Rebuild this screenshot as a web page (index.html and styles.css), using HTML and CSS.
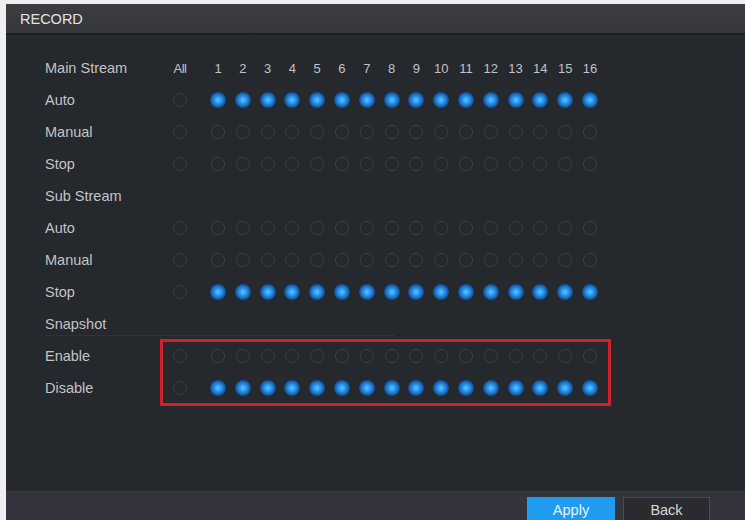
FILE: index.html
```html
<!DOCTYPE html>
<html>
<head>
<meta charset="utf-8">
<link rel="stylesheet" href="styles.css">
</head>
<body>
<div class="panel">
  <div class="titlebar">RECORD</div>
  <div class="content">
    <div class="row head">
      <span class="label">Main Stream</span>
      <span class="cell all">All</span>
      <span class="cells">
        <span class="cell">1</span><span class="cell">2</span><span class="cell">3</span><span class="cell">4</span><span class="cell">5</span><span class="cell">6</span><span class="cell">7</span><span class="cell">8</span><span class="cell">9</span><span class="cell">10</span><span class="cell">11</span><span class="cell">12</span><span class="cell">13</span><span class="cell">14</span><span class="cell">15</span><span class="cell">16</span>
      </span>
    </div>
    <div class="row">
      <span class="label">Auto</span>
      <span class="cell all"><i class="r"></i></span>
      <span class="cells">
        <span class="cell"><i class="r on"></i></span><span class="cell"><i class="r on"></i></span><span class="cell"><i class="r on"></i></span><span class="cell"><i class="r on"></i></span><span class="cell"><i class="r on"></i></span><span class="cell"><i class="r on"></i></span><span class="cell"><i class="r on"></i></span><span class="cell"><i class="r on"></i></span><span class="cell"><i class="r on"></i></span><span class="cell"><i class="r on"></i></span><span class="cell"><i class="r on"></i></span><span class="cell"><i class="r on"></i></span><span class="cell"><i class="r on"></i></span><span class="cell"><i class="r on"></i></span><span class="cell"><i class="r on"></i></span><span class="cell"><i class="r on"></i></span>
      </span>
    </div>
    <div class="row">
      <span class="label">Manual</span>
      <span class="cell all"><i class="r"></i></span>
      <span class="cells">
        <span class="cell"><i class="r"></i></span><span class="cell"><i class="r"></i></span><span class="cell"><i class="r"></i></span><span class="cell"><i class="r"></i></span><span class="cell"><i class="r"></i></span><span class="cell"><i class="r"></i></span><span class="cell"><i class="r"></i></span><span class="cell"><i class="r"></i></span><span class="cell"><i class="r"></i></span><span class="cell"><i class="r"></i></span><span class="cell"><i class="r"></i></span><span class="cell"><i class="r"></i></span><span class="cell"><i class="r"></i></span><span class="cell"><i class="r"></i></span><span class="cell"><i class="r"></i></span><span class="cell"><i class="r"></i></span>
      </span>
    </div>
    <div class="row">
      <span class="label">Stop</span>
      <span class="cell all"><i class="r"></i></span>
      <span class="cells">
        <span class="cell"><i class="r"></i></span><span class="cell"><i class="r"></i></span><span class="cell"><i class="r"></i></span><span class="cell"><i class="r"></i></span><span class="cell"><i class="r"></i></span><span class="cell"><i class="r"></i></span><span class="cell"><i class="r"></i></span><span class="cell"><i class="r"></i></span><span class="cell"><i class="r"></i></span><span class="cell"><i class="r"></i></span><span class="cell"><i class="r"></i></span><span class="cell"><i class="r"></i></span><span class="cell"><i class="r"></i></span><span class="cell"><i class="r"></i></span><span class="cell"><i class="r"></i></span><span class="cell"><i class="r"></i></span>
      </span>
    </div>
    <div class="row">
      <span class="label">Sub Stream</span>
    </div>
    <div class="row">
      <span class="label">Auto</span>
      <span class="cell all"><i class="r"></i></span>
      <span class="cells">
        <span class="cell"><i class="r"></i></span><span class="cell"><i class="r"></i></span><span class="cell"><i class="r"></i></span><span class="cell"><i class="r"></i></span><span class="cell"><i class="r"></i></span><span class="cell"><i class="r"></i></span><span class="cell"><i class="r"></i></span><span class="cell"><i class="r"></i></span><span class="cell"><i class="r"></i></span><span class="cell"><i class="r"></i></span><span class="cell"><i class="r"></i></span><span class="cell"><i class="r"></i></span><span class="cell"><i class="r"></i></span><span class="cell"><i class="r"></i></span><span class="cell"><i class="r"></i></span><span class="cell"><i class="r"></i></span>
      </span>
    </div>
    <div class="row">
      <span class="label">Manual</span>
      <span class="cell all"><i class="r"></i></span>
      <span class="cells">
        <span class="cell"><i class="r"></i></span><span class="cell"><i class="r"></i></span><span class="cell"><i class="r"></i></span><span class="cell"><i class="r"></i></span><span class="cell"><i class="r"></i></span><span class="cell"><i class="r"></i></span><span class="cell"><i class="r"></i></span><span class="cell"><i class="r"></i></span><span class="cell"><i class="r"></i></span><span class="cell"><i class="r"></i></span><span class="cell"><i class="r"></i></span><span class="cell"><i class="r"></i></span><span class="cell"><i class="r"></i></span><span class="cell"><i class="r"></i></span><span class="cell"><i class="r"></i></span><span class="cell"><i class="r"></i></span>
      </span>
    </div>
    <div class="row">
      <span class="label">Stop</span>
      <span class="cell all"><i class="r"></i></span>
      <span class="cells">
        <span class="cell"><i class="r on"></i></span><span class="cell"><i class="r on"></i></span><span class="cell"><i class="r on"></i></span><span class="cell"><i class="r on"></i></span><span class="cell"><i class="r on"></i></span><span class="cell"><i class="r on"></i></span><span class="cell"><i class="r on"></i></span><span class="cell"><i class="r on"></i></span><span class="cell"><i class="r on"></i></span><span class="cell"><i class="r on"></i></span><span class="cell"><i class="r on"></i></span><span class="cell"><i class="r on"></i></span><span class="cell"><i class="r on"></i></span><span class="cell"><i class="r on"></i></span><span class="cell"><i class="r on"></i></span><span class="cell"><i class="r on"></i></span>
      </span>
    </div>
    <div class="row section">
      <span class="label">Snapshot</span>
    </div>
    <div class="snap">
      <div class="row">
        <span class="label">Enable</span>
        <span class="cell all"><i class="r"></i></span>
        <span class="cells">
          <span class="cell"><i class="r"></i></span><span class="cell"><i class="r"></i></span><span class="cell"><i class="r"></i></span><span class="cell"><i class="r"></i></span><span class="cell"><i class="r"></i></span><span class="cell"><i class="r"></i></span><span class="cell"><i class="r"></i></span><span class="cell"><i class="r"></i></span><span class="cell"><i class="r"></i></span><span class="cell"><i class="r"></i></span><span class="cell"><i class="r"></i></span><span class="cell"><i class="r"></i></span><span class="cell"><i class="r"></i></span><span class="cell"><i class="r"></i></span><span class="cell"><i class="r"></i></span><span class="cell"><i class="r"></i></span>
        </span>
      </div>
      <div class="row">
        <span class="label">Disable</span>
        <span class="cell all"><i class="r"></i></span>
        <span class="cells">
          <span class="cell"><i class="r on"></i></span><span class="cell"><i class="r on"></i></span><span class="cell"><i class="r on"></i></span><span class="cell"><i class="r on"></i></span><span class="cell"><i class="r on"></i></span><span class="cell"><i class="r on"></i></span><span class="cell"><i class="r on"></i></span><span class="cell"><i class="r on"></i></span><span class="cell"><i class="r on"></i></span><span class="cell"><i class="r on"></i></span><span class="cell"><i class="r on"></i></span><span class="cell"><i class="r on"></i></span><span class="cell"><i class="r on"></i></span><span class="cell"><i class="r on"></i></span><span class="cell"><i class="r on"></i></span><span class="cell"><i class="r on"></i></span>
        </span>
      </div>
      <div class="highlight"></div>
    </div>
  </div>
  <div class="footer">
    <button class="btn apply">Apply</button>
    <button class="btn back">Back</button>
  </div>
</div>
</body>
</html>
```
FILE: styles.css
```css
* { box-sizing: border-box; }
html, body {
  margin: 0;
  padding: 0;
  background: #eeeff1;
  width: 745px;
  height: 520px;
  overflow: hidden;
  font-family: "Liberation Sans", Arial, sans-serif;
}
.panel {
  margin: 4px 0 0 6px;
  width: 739px;
  height: 516px;
  display: flex;
  flex-direction: column;
  background: #25282d;
}
.titlebar {
  height: 31px;
  flex: none;
  background: linear-gradient(#3c3d41, #37383c);
  border-bottom: 2px solid #1d1f23;
  color: #e2e2e2;
  font-size: 14.5px;
  padding-left: 14px;
  display: flex;
  align-items: center;
}
.content {
  flex: 1;
  padding: 17px 0 0 39px;
  background: #25282d;
}
.row {
  height: 32px;
  display: flex;
  align-items: center;
}
.label {
  width: 123px;
  flex: none;
  color: #c2c3c5;
  font-size: 14.5px;
}
.cell {
  width: 24.8px;
  flex: none;
  display: flex;
  justify-content: center;
  align-items: center;
  color: #c2c3c5;
  font-size: 13px;
}
.cell.all {
  width: 24px;
  margin-right: 13.6px;
  letter-spacing: -0.5px;
}
.cells {
  display: flex;
}
.section {
  position: relative;
}
.section::after {
  content: "";
  position: absolute;
  left: 0;
  bottom: 4px;
  width: 350px;
  height: 1px;
  background: #30333a;
}
.r {
  display: block;
  width: 14px;
  height: 14px;
  border-radius: 50%;
  border: 1.5px solid #3c3f45;
  background: #25282d;
}
.r.on {
  border: none;
  background: radial-gradient(circle, #6cc2ff 0, #3aa2f4 22%, #1a7fd6 45%, #155ea8 60%, rgba(20, 80, 150, 0.6) 75%, rgba(20, 60, 110, 0) 100%);
  width: 16px;
  height: 16px;
}
.snap {
  position: relative;
}
.highlight {
  position: absolute;
  left: 115px;
  top: -1px;
  width: 451px;
  height: 67px;
  border: 3px solid #d31f2b;
  pointer-events: none;
}
.footer {
  height: 30px;
  flex: none;
  background: #34343c;
  border-top: 1px solid #2b2d32;
  display: flex;
  align-items: flex-end;
  padding-left: 521px;
  gap: 8px;
}
.btn {
  height: 25px;
  margin-bottom: -2px;
  font-family: "Liberation Sans", Arial, sans-serif;
  font-size: 14.5px;
  padding: 0;
}
.apply {
  width: 88px;
  background: #1f9cef;
  border: none;
  color: #e8f3ff;
}
.back {
  width: 87px;
  background: #2a2b31;
  border: 1px solid #4a4c52;
  color: #d8d8d8;
}
```
